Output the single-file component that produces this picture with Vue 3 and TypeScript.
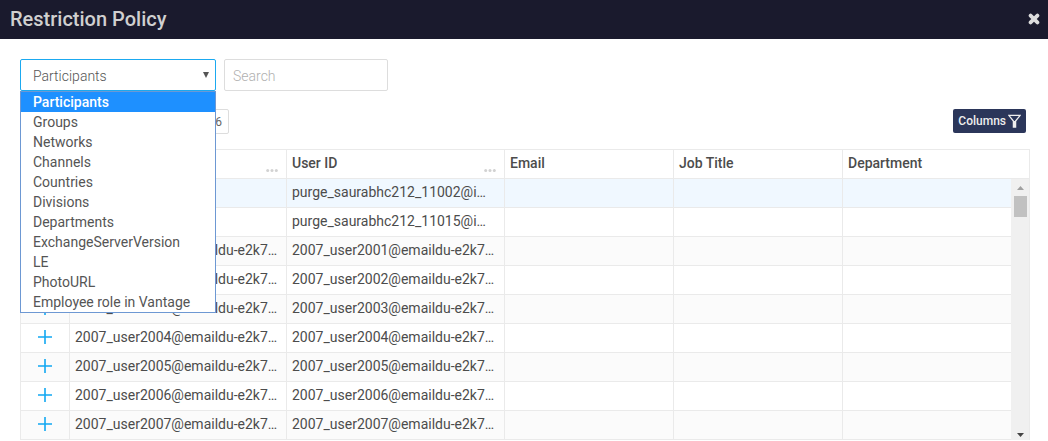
<script setup lang="ts">
import { ref } from 'vue'

interface Row {
  name: string
  userId: string
}

const options: string[] = [
  'Participants',
  'Groups',
  'Networks',
  'Channels',
  'Countries',
  'Divisions',
  'Departments',
  'ExchangeServerVersion',
  'LE',
  'PhotoURL',
  'Employee role in Vantage',
]

const category = ref('Participants')
const search = ref('')

const rows: Row[] = [
  { name: '', userId: 'purge_saurabhc212_11002@i…' },
  { name: '', userId: 'purge_saurabhc212_11015@i…' },
  ...[1, 2, 3, 4, 5, 6, 7].map((n) => {
    const id = `2007_user200${n}@emaildu-e2k7…`
    return { name: id, userId: id }
  }),
]
</script>

<template>
  <div class="dialog">
    <header class="titlebar">
      <h1>Restriction Policy</h1>
      <button class="close" type="button" aria-label="Close">
        <svg width="12" height="12" viewBox="0 0 12 12">
          <path d="M2.6 2.6 9.4 9.4M9.4 2.6 2.6 9.4" stroke="currentColor" stroke-width="3.8" stroke-linecap="round" />
        </svg>
      </button>
    </header>

    <main>
      <div class="filters">
        <div class="picker">
          <select v-model="category" aria-label="Category">
            <option v-for="o in options" :key="o">{{ o }}</option>
          </select>
          <svg class="arrow" width="6" height="6" viewBox="0 0 6 6"><path d="M0 0H6L3 6Z" fill="#555" /></svg>
          <ul class="menu" role="listbox" aria-label="Categories">
            <li
              v-for="o in options"
              :key="o"
              role="option"
              :aria-selected="o === category"
              :class="{ active: o === category }"
              @click="category = o"
            >{{ o }}</li>
          </ul>
        </div>
        <input v-model="search" class="search" type="text" placeholder="Search" aria-label="Search">
      </div>

      <div class="tools">
        <span class="count">6</span>
        <button class="columns" type="button">
          Columns
          <svg width="13" height="14" viewBox="0 0 13 14">
            <path d="M0.8 1.3H12.2L7.6 7V13H5.4V7Z" fill="none" stroke="currentColor" stroke-width="1.3" />
            <path d="M5.4 7h2.2V13H5.4Z" fill="currentColor" />
          </svg>
        </button>
      </div>

      <div class="grid">
        <table>
          <colgroup>
            <col class="c-add"><col class="c-id"><col class="c-user"><col><col><col><col class="c-bar">
          </colgroup>
          <thead>
            <tr>
              <th></th>
              <th><svg class="dots" width="12" height="3" viewBox="0 0 12 3"><circle cx="1.7" cy="1.5" r="1.5" /><circle cx="6" cy="1.5" r="1.5" /><circle cx="10.3" cy="1.5" r="1.5" /></svg></th>
              <th>User ID<svg class="dots" width="12" height="3" viewBox="0 0 12 3"><circle cx="1.7" cy="1.5" r="1.5" /><circle cx="6" cy="1.5" r="1.5" /><circle cx="10.3" cy="1.5" r="1.5" /></svg></th>
              <th>Email</th>
              <th>Job Title</th>
              <th colspan="2">Department</th>
            </tr>
          </thead>
          <tbody>
            <tr v-for="(row, i) in rows" :key="row.userId" :class="{ selected: i === 0 }">
              <td class="add">
                <button type="button" aria-label="Add">
                  <svg width="14" height="14" viewBox="0 0 14 14"><path d="M0 7H14M7 0V14" stroke="currentColor" stroke-width="1.6" /></svg>
                </button>
              </td>
              <td>{{ row.name }}</td>
              <td>{{ row.userId }}</td>
              <td></td>
              <td></td>
              <td></td>
              <td v-if="i === 0" class="bar" :rowspan="rows.length"></td>
            </tr>
          </tbody>
        </table>
        <div class="scrollbar" aria-hidden="true">
          <svg width="7" height="4" viewBox="0 0 7 4"><path d="M0 4 3.5 0 7 4Z" fill="#a0a0a0" /></svg>
          <div class="thumb"></div>
          <svg width="7" height="4" viewBox="0 0 7 4"><path d="M0 0H7L3.5 4Z" fill="#444" /></svg>
        </div>
      </div>
    </main>
  </div>
</template>

<style>
body {
  margin: 0;
  overflow: hidden;
}
</style>

<style scoped>
.dialog {
  font-family: Roboto, "Liberation Sans", sans-serif;
  font-size: 14px;
  color: #4c4c4c;
  background: #fff;
}
* {
  box-sizing: border-box;
}
button,
input,
select {
  font-family: inherit;
}
.titlebar {
  display: flex;
  align-items: center;
  justify-content: space-between;
  height: 39px;
  padding: 0 8px 2px 10px;
  background: #1a1a2d;
  color: #d0d0d0;
}
h1 {
  margin: 0;
  font-size: 20px;
  font-weight: 500;
  line-height: 24px;
}
.close {
  display: flex;
  padding: 0;
  border: 0;
  background: none;
  color: #ddd;
}
main {
  padding: 20px 18px 0 20px;
}
.filters {
  display: flex;
  gap: 8px;
}
.picker {
  position: relative;
  width: 196px;
}
select {
  display: block;
  width: 100%;
  height: 32px;
  padding: 2px 12px 0;
  border: 1px solid #1ba9f0;
  border-radius: 2px;
  appearance: none;
  background: #fff;
  color: #555;
  font-size: 14px;
  font-weight: 300;
}
.arrow {
  position: absolute;
  right: 7px;
  top: 13px;
}
.menu {
  position: absolute;
  z-index: 2;
  top: 100%;
  left: 0;
  width: 100%;
  margin: 0;
  padding: 0;
  border: 1px solid #6d98d3;
  background: #fff;
  list-style: none;
}
.menu li {
  height: 20px;
  padding-left: 12px;
  line-height: 20px;
  color: #555;
}
.menu .active {
  background: #1e90ff;
  color: #fff;
  font-weight: 500;
}
.search {
  width: 164px;
  height: 32px;
  padding: 2px 8px 0;
  border: 1px solid #ddd;
  border-radius: 2px;
  color: #555;
  font-size: 14px;
  font-weight: 300;
}
.search::placeholder {
  color: #b0b0b0;
}
.tools {
  display: flex;
  justify-content: space-between;
  margin: 18px 4px 15px 0;
}
.count {
  width: 209px;
  height: 25px;
  padding-right: 6px;
  border: 1px solid #ddd;
  border-radius: 2px;
  color: #666;
  font-size: 12px;
  line-height: 24px;
  text-align: right;
}
.columns {
  display: flex;
  align-items: center;
  gap: 2px;
  height: 24px;
  padding: 0 5px;
  border: 0;
  border-radius: 2px;
  background: #2b365a;
  color: #eee;
  font-size: 12px;
  font-weight: 500;
}
.grid {
  position: relative;
}
table {
  width: 100%;
  table-layout: fixed;
  border-collapse: separate;
  border-spacing: 0;
  border: 1px solid #eaeaea;
  border-width: 1px 1px 0 0;
}
.c-add {
  width: 49px;
}
.c-id {
  width: 217px;
}
.c-user {
  width: 218px;
}
.c-bar {
  width: 18px;
}
th,
td {
  height: 29px;
  padding: 0 5px 2px;
  border-left: 1px solid #eaeaea;
  border-bottom: 1px solid #eaeaea;
  line-height: 20px;
  text-align: left;
  white-space: nowrap;
}
th {
  position: relative;
  font-weight: 500;
}
.dots {
  position: absolute;
  right: 8px;
  bottom: 6px;
  fill: #d2d2d2;
}
tbody tr:nth-child(odd) {
  background: #fbfbfb;
}
tbody tr.selected {
  background: #f0f8ff;
}
.add button {
  display: flex;
  margin: 0 auto;
  padding: 0;
  border: 0;
  background: none;
  color: #12a8f2;
}
.bar {
  padding: 0;
  border: 0;
  background: #f0f0f0;
}
.scrollbar {
  position: absolute;
  top: 30px;
  right: 1px;
  bottom: 0;
  display: flex;
  flex-direction: column;
  align-items: center;
  width: 17px;
  padding: 7px 0 3px;
  background: #f0f0f0;
}
.thumb {
  width: 13px;
  height: 21px;
  margin: 6px 0 auto;
  background: #c1c1c1;
}
</style>
